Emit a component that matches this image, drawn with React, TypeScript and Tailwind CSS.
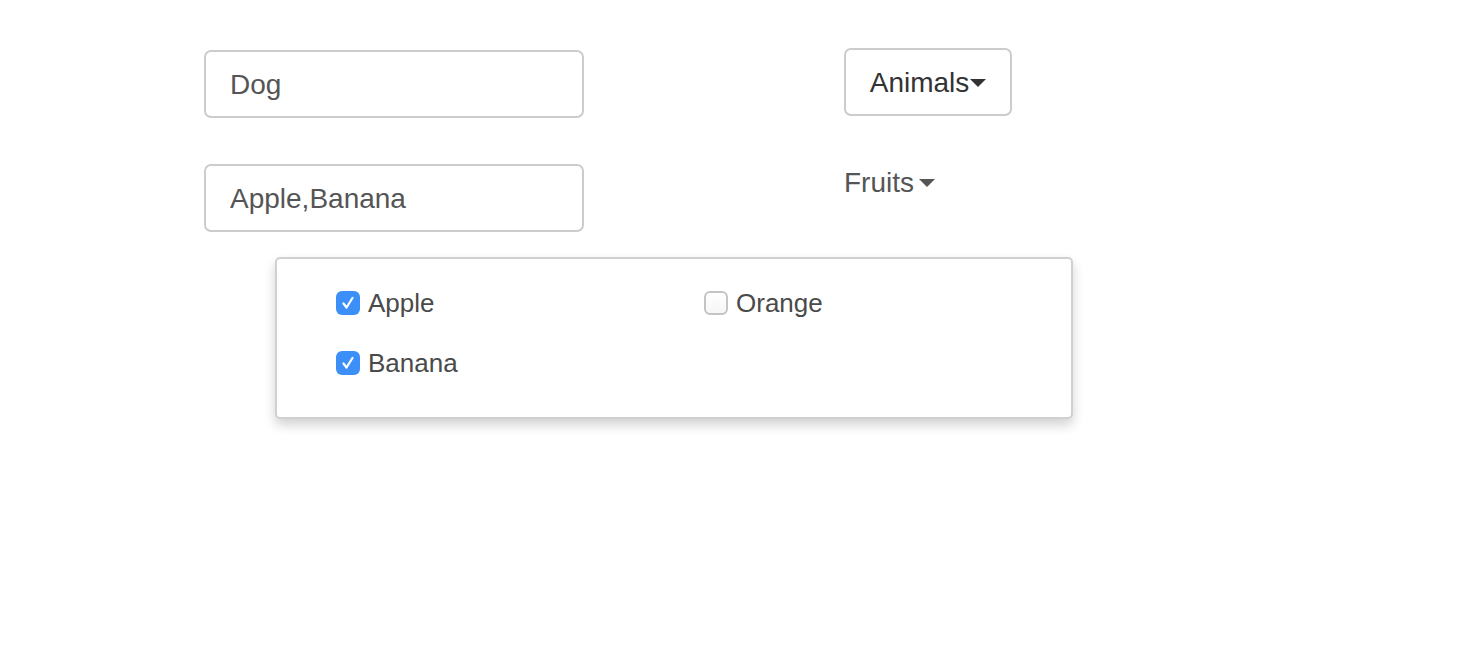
import { useState } from "react";

type Fruit = { name: string; checked: boolean };

function Caret() {
  return (
    <span className="ml-[1px] inline-block h-0 w-0 border-x-[8px] border-t-[8px] border-x-transparent border-t-current align-middle" />
  );
}

function Check({ checked, onClick }: { checked: boolean; onClick: () => void }) {
  return (
    <span
      onClick={onClick}
      className={`flex h-[24px] w-[24px] items-center justify-center rounded-[6px] ${
        checked
          ? "bg-[#3b8ff7]"
          : "border-2 border-[#c4c4c4] bg-gradient-to-b from-white to-[#f6f6f6]"
      }`}
    >
      {checked && (
        <svg width="16" height="16" viewBox="0 0 16 16" fill="none">
          <path d="M3.5 8.5 L6.5 12.5 L12.5 3" stroke="white" strokeWidth="2.2" strokeLinecap="round" strokeLinejoin="round" />
        </svg>
      )}
    </span>
  );
}

export default function App() {
  const [fruits, setFruits] = useState<Fruit[]>([
    { name: "Apple", checked: true },
    { name: "Orange", checked: false },
    { name: "Banana", checked: true },
  ]);

  const toggle = (i: number) =>
    setFruits((f) => f.map((x, j) => (j === i ? { ...x, checked: !x.checked } : x)));

  const selected = fruits.filter((f) => f.checked).map((f) => f.name).join(",");

  return (
    <div className="min-h-screen bg-white font-['Liberation_Sans',Arial,sans-serif]">
      <div className="flex pl-[204px] pt-[48px]">
        <div className="flex w-[380px] flex-col">
          <input
            readOnly
            value="Dog"
            className="mt-[2px] h-[68px] w-full rounded-[7px] border-2 border-[#cccccc] px-[24px] pt-[2px] text-[28px] text-[#555] outline-none"
          />
          <input
            readOnly
            value={selected}
            className="mt-[46px] h-[68px] w-full rounded-[7px] border-2 border-[#cccccc] px-[24px] pt-[2px] text-[28px] text-[#555] outline-none"
          />
        </div>
        <div className="ml-[260px] flex flex-col items-start">
          <button className="flex h-[68px] w-[168px] items-center justify-center rounded-[7px] border-2 border-[#cccccc] bg-white pt-[2px] text-[28px] text-[#333]">
            Animals
            <Caret />
          </button>
          <div className="mt-[47px] flex h-[40px] items-center text-[28px] text-[#555]">
            Fruits
            <span className="ml-[4px] flex">
              <Caret />
            </span>
          </div>
        </div>
      </div>

      <div className="ml-[275px] mt-[25px] h-[162px] w-[798px] rounded-[5px] border-2 border-[#d0d0d0] bg-white pl-[59px] pt-[24px] shadow-[0_6px_12px_rgba(0,0,0,0.18)]">
        <div className="grid grid-cols-[368px_1fr] gap-y-[20px]">
          {fruits.map((f, i) => (
            <label key={f.name} className="flex h-[40px] items-center gap-[8px] text-[26px] text-[#4a4a4a]">
              <Check checked={f.checked} onClick={() => toggle(i)} />
              {f.name}
            </label>
          ))}
        </div>
      </div>
    </div>
  );
}
